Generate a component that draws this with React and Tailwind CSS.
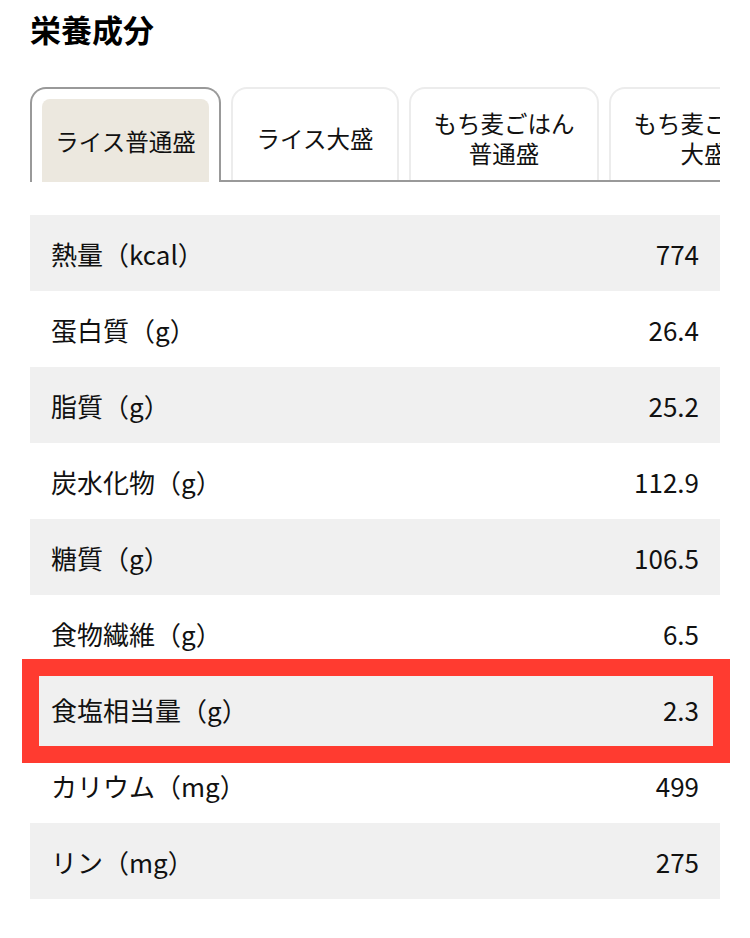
import React, { useState } from "react";

const tabs = [
  { label: ["ライス普通盛"], w: "w-[191px]" },
  { label: ["ライス大盛"], w: "w-[168px]" },
  { label: ["もち麦ごはん", "普通盛"], w: "w-[190px]" },
  { label: ["もち麦ごはん", "大盛"], w: "w-[190px]" },
];

const rows = [
  ["熱量（kcal）", "774"],
  ["蛋白質（g）", "26.4"],
  ["脂質（g）", "25.2"],
  ["炭水化物（g）", "112.9"],
  ["糖質（g）", "106.5"],
  ["食物繊維（g）", "6.5"],
  ["食塩相当量（g）", "2.3"],
  ["カリウム（mg）", "499"],
  ["リン（mg）", "275"],
];

const App = () => {
  const [active, setActive] = useState(0);

  return (
    <div
      className="min-h-screen bg-white px-[30px] text-[#111]"
      style={{ fontFamily: '"Noto Sans CJK JP", "Noto Sans", sans-serif' }}
    >
      <h2 className="pt-[7px] text-[31px] font-bold leading-[44px] text-black">
        栄養成分
      </h2>

      {/* tabs */}
      <div className="mt-[36px] overflow-hidden">
        <div className="flex items-end gap-[10px] border-b-2 border-[#999]">
          {tabs.map((t, i) =>
            i === active ? (
              <button
                key={i}
                onClick={() => setActive(i)}
                className={`${t.w} relative z-10 -mb-[2px] h-[95px] shrink-0 rounded-t-[16px] border-2 border-b-0 border-[#999] bg-white px-[10px] pt-[10px]`}
              >
                <div className="flex h-full flex-col items-center justify-center rounded-t-[8px] bg-[#ece8df] text-[23.5px] leading-[30px]">
                  {t.label.map((l) => (
                    <span key={l} className="whitespace-nowrap">{l}</span>
                  ))}
                </div>
              </button>
            ) : (
              <button
                key={i}
                onClick={() => setActive(i)}
                className={`${t.w} flex h-[93px] shrink-0 flex-col items-center justify-center rounded-t-[16px] border-2 border-b-0 border-[#ececec] bg-white pt-[6px] text-[23.5px] leading-[30px]`}
              >
                {t.label.map((l) => (
                  <span key={l} className="whitespace-nowrap">
                    {l}
                  </span>
                ))}
              </button>
            )
          )}
        </div>
      </div>

      {/* table */}
      <div className="mt-[33px]">
        {rows.map(([name, value], i) => (
          <div
            key={name}
            className={`relative flex h-[76px] items-center justify-between px-[21px] text-[26px] ${
              i % 2 === 0 ? "bg-[#f0f0f0]" : "bg-white"
            }`}
          >
            <span>{name}</span>
            <span>{value}</span>
            {name.startsWith("食塩") && (
              <div className="pointer-events-none absolute -top-[12px] -right-[10px] -bottom-[16px] -left-[8px] z-10 border-[17px] border-[#ff3b30]" />
            )}
          </div>
        ))}
      </div>
    </div>
  );
};

export default App;
